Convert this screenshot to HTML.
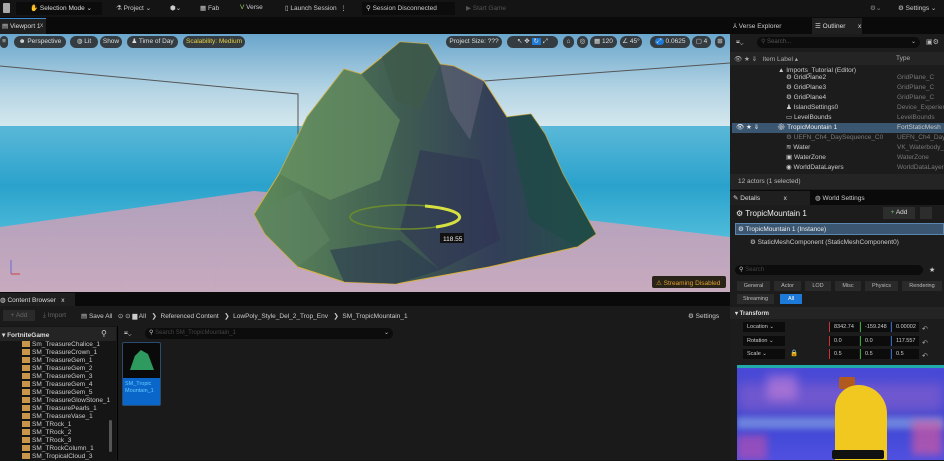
<!DOCTYPE html>
<html><head><meta charset="utf-8"><style>
*{margin:0;padding:0;box-sizing:border-box}
body{width:944px;height:460px;overflow:hidden;background:#151515;font-family:"Liberation Sans",sans-serif;color:#c8c8c8;font-size:7px;position:relative}
.a{position:absolute;white-space:nowrap}
.pill{position:absolute;top:36px;height:12px;border-radius:6px;background:rgba(40,40,40,.85);color:#ddd;font-size:6.5px;line-height:12px;text-align:center}
.row{position:absolute;left:732px;width:212px;height:10px;font-size:6.5px;line-height:10px;color:#ccc}
.tree{position:absolute;left:22px;font-size:6.5px;color:#ccc;line-height:8px}
.tree i{display:inline-block;width:8px;height:6px;background:#c8964a;margin-right:2px;vertical-align:-1px}
.btn{position:absolute;height:10px;background:#2a2a2a;color:#bbb;font-size:5.5px;line-height:10px;text-align:center}
.fld{position:absolute;height:10px;background:#0c0c0c;color:#ccc;font-size:5.5px;line-height:10px;padding-left:4px}
</style></head><body>
<div class="a" style="left:0;top:0;width:944px;height:17px;background:#141414"></div>
<div class="a" style="left:3px;top:3px;width:7px;height:10px;background:#aaa;border-radius:1px"></div>
<div class="a" style="left:16px;top:2px;width:86px;height:13px;background:#0c0c0c"></div>
<div class="a" style="left:30px;top:4px;font-size:6.5px;color:#ddd">✋ Selection Mode ⌄</div>
<div class="a" style="left:116px;top:4px;font-size:6.5px;color:#ccc">⚗ Project ⌄</div>
<div class="a" style="left:170px;top:4px;font-size:6.5px;color:#ccc">⬢⌄</div>
<div class="a" style="left:200px;top:4px;font-size:6.5px;color:#ccc">▦ Fab</div>
<div class="a" style="left:240px;top:4px;font-size:6.5px;color:#ccc"><span style="color:#9c6">V</span> Verse</div>
<div class="a" style="left:285px;top:4px;font-size:6.5px;color:#ccc">▯ Launch Session &nbsp;⋮</div>
<div class="a" style="left:362px;top:2px;width:93px;height:13px;background:#0c0c0c"></div>
<div class="a" style="left:366px;top:4px;font-size:6.5px;color:#ccc">⚲ Session Disconnected</div>
<div class="a" style="left:466px;top:4px;font-size:6.5px;color:#555">▶ Start Game</div>
<div class="a" style="left:870px;top:4px;font-size:6.5px;color:#888">⚙⌄</div>
<div class="a" style="left:898px;top:4px;font-size:6.5px;color:#ccc">⚙ Settings ⌄</div>
<div class="a" style="left:0;top:17px;width:944px;height:17px;background:#0a0a0a"></div>
<div class="a" style="left:0;top:18px;width:46px;height:16px;background:#1f1f1f;border-top:1px solid #3a8ad0"></div>
<div class="a" style="left:2px;top:22px;font-size:6.5px;color:#ddd">▤ Viewport 1</div>
<div class="a" style="left:40px;top:22px;font-size:6.5px;color:#aaa">x</div>
<svg class="a" style="left:0;top:34px" width="730" height="258" viewBox="0 34 730 258">
<defs>
<linearGradient id="sky" x1="0" y1="0" x2="0" y2="1"><stop offset="0" stop-color="#6aa6cc"/><stop offset=".6" stop-color="#b4d4e4"/><stop offset="1" stop-color="#d6e8ee"/></linearGradient>
<linearGradient id="sea" x1="0" y1="0" x2="0" y2="1"><stop offset="0" stop-color="#5ab8d8"/><stop offset=".5" stop-color="#2aa2cc"/><stop offset="1" stop-color="#55c0dc"/></linearGradient>
<linearGradient id="fl" x1="0" y1="0" x2="0" y2="1"><stop offset="0" stop-color="#b0a0bc"/><stop offset="1" stop-color="#c8aabe"/></linearGradient>
<linearGradient id="mt" x1="0" y1="0" x2="1" y2="0"><stop offset="0" stop-color="#5e8a5a"/><stop offset=".45" stop-color="#3e5a52"/><stop offset=".7" stop-color="#333e58"/><stop offset="1" stop-color="#24524a"/></linearGradient>
</defs>
<rect x="0" y="34" width="730" height="93" fill="url(#sky)"/>
<rect x="0" y="126" width="730" height="120" fill="url(#sea)"/>
<polygon points="0,227 254,191 596,221 730,237 730,292 0,292" fill="url(#fl)"/>
<g stroke="#b8a6c8" stroke-width=".5" opacity=".6">
<line x1="0" y1="250" x2="730" y2="250"/><line x1="0" y1="265" x2="730" y2="265"/><line x1="0" y1="280" x2="730" y2="280"/>
<line x1="60" y1="220" x2="20" y2="292"/><line x1="140" y1="208" x2="120" y2="292"/><line x1="220" y1="196" x2="215" y2="292"/><line x1="640" y1="228" x2="660" y2="292"/><line x1="700" y1="234" x2="725" y2="292"/>
</g>
<g stroke="#555" stroke-width="1" fill="none"><polyline points="0,66 298,94 298,144"/><line x1="484" y1="81" x2="730" y2="63"/></g>
<polygon points="254,214 279,174 307,117 344,69 361,74 382,57 400,42 428,44 440,64 454,66 484,81 507,117 531,114 545,134 563,174 596,234 577,247 489,267 396,284 344,282 298,267 265,234" fill="url(#mt)" stroke="#d8b040" stroke-width="1"/>
<polygon points="307,117 344,69 361,74 400,120 380,180 330,200 279,174" fill="#6a9464" opacity=".6"/>
<polygon points="382,57 400,42 428,44 440,64 420,110 395,100" fill="#3e5a4a" opacity=".8"/>
<polygon points="440,64 454,66 484,81 470,140 450,110" fill="#6a6a80" opacity=".5"/>
<polygon points="420,150 480,160 500,240 440,270 400,230" fill="#2e3454" opacity=".6"/>
<polygon points="507,117 531,114 545,134 563,174 596,234 577,247 530,220" fill="#1e4a46" opacity=".7"/>
<polygon points="254,214 300,190 330,240 298,267 265,234" fill="#5e8460" opacity=".6"/>
<polygon points="330,250 400,240 440,270 396,284 344,282" fill="#2a3850" opacity=".6"/>
<ellipse cx="405" cy="217" rx="55" ry="12" fill="none" stroke="#6a8a30" stroke-width="1.5"/>
<path d="M425,206 A55,12 0 0 1 436,227" fill="none" stroke="#d6e040" stroke-width="3"/>
<rect x="440" y="233" width="24" height="10" fill="#111"/>
<text x="443" y="241" font-size="6.5" fill="#eee" font-family="Liberation Sans">118.55</text>
<line x1="11" y1="260" x2="11" y2="274" stroke="#6a6ad0"/><line x1="11" y1="274" x2="20" y2="274" stroke="#d04040"/>
<rect x="652" y="276" width="74" height="12" rx="2" fill="#2a2418"/>
<text x="656" y="285" font-size="6.5" fill="#e0a030" font-family="Liberation Sans">⚠ Streaming Disabled</text>
</svg>
<div class="pill" style="left:0;width:8px">≡</div>
<div class="pill" style="left:14px;width:52px">☻ Perspective</div>
<div class="pill" style="left:70px;width:28px">◍ Lit</div>
<div class="pill" style="left:100px;width:22px">Show</div>
<div class="pill" style="left:127px;width:51px">♟ Time of Day</div>
<div class="pill" style="left:183px;width:62px;color:#e8d040">Scalability: Medium</div>
<div class="pill" style="left:446px;width:56px">Project Size: ???</div>
<div class="pill" style="left:507px;width:51px">↖ ✥ <span style="background:#1e7ad8;padding:0 2px">↻</span> ⤢</div>
<div class="pill" style="left:563px;width:11px">⌂</div>
<div class="pill" style="left:577px;width:11px">◎</div>
<div class="pill" style="left:590px;width:27px">▦ 120</div>
<div class="pill" style="left:620px;width:22px">∠ 45°</div>
<div class="pill" style="left:650px;width:40px"><span style="background:#1e7ad8;padding:0 2px;border-radius:4px">⤢</span> 0.0625</div>
<div class="pill" style="left:692px;width:19px">▢ 4</div>
<div class="pill" style="left:715px;width:10px">⊞</div>
<div class="a" style="left:730px;top:17px;width:214px;height:443px;background:#1c1c1c"></div>
<div class="a" style="left:730px;top:17px;width:214px;height:17px;background:#0a0a0a"></div>
<div class="a" style="left:733px;top:22px;font-size:6.5px;color:#ccc">⅄ Verse Explorer</div>
<div class="a" style="left:812px;top:18px;width:50px;height:16px;background:#1f1f1f"></div>
<div class="a" style="left:815px;top:22px;font-size:6.5px;color:#ddd">☰ Outliner &nbsp;&nbsp;&nbsp;&nbsp;&nbsp;&nbsp;x</div>
<div class="a" style="left:736px;top:39px;font-size:6.5px;color:#bbb">⩸⌄</div>
<div class="a" style="left:757px;top:37px;width:163px;height:11px;border-radius:6px;background:#0c0c0c;color:#555;font-size:6px;line-height:11px;padding-left:4px">⚲ Search... <span style="float:right;margin-right:4px;color:#bbb">⌄</span></div>
<div class="a" style="left:926px;top:38px;font-size:7px;color:#bbb">▣⚙</div>
<div class="a" style="left:730px;top:52px;width:214px;height:13px;background:#242424"></div>
<div class="a" style="left:734px;top:55px;font-size:6.5px;color:#aaa">👁 ★ ⇓ &nbsp;&nbsp;Item Label ▴</div>
<div class="a" style="left:896px;top:55px;font-size:6.5px;color:#aaa">Type</div>
<div class="row" style="top:66px;padding-left:46px">▲ Imports_Tutorial (Editor)</div>
<div class="row" style="top:73px;padding-left:54px">⚙ GridPlane2<span class="a" style="left:165px;color:#777">GridPlane_C</span></div>
<div class="row" style="top:83px;padding-left:54px">⚙ GridPlane3<span class="a" style="left:165px;color:#777">GridPlane_C</span></div>
<div class="row" style="top:93px;padding-left:54px">⚙ GridPlane4<span class="a" style="left:165px;color:#777">GridPlane_C</span></div>
<div class="row" style="top:103px;padding-left:54px">♟ IslandSettings0<span class="a" style="left:165px;color:#777">Device_Experien</span></div>
<div class="row" style="top:113px;padding-left:54px">▭ LevelBounds<span class="a" style="left:165px;color:#777">LevelBounds</span></div>
<div class="row" style="top:123px;background:#3a5670;padding-left:4px;color:#eee">👁 ★ ⇓ &nbsp;&nbsp;&nbsp;&nbsp;&nbsp;&nbsp;&nbsp;&nbsp;&nbsp;⚙ TropicMountain 1<span class="a" style="left:165px;color:#ccc">FortStaticMesh</span></div>
<div class="row" style="top:133px;padding-left:54px;color:#777">⚙ UEFN_Ch4_DaySequence_C0<span class="a" style="left:165px;color:#777">UEFN_Ch4_DayS</span></div>
<div class="row" style="top:143px;padding-left:54px">≋ Water<span class="a" style="left:165px;color:#777">VK_Waterbody_</span></div>
<div class="row" style="top:153px;padding-left:54px">▣ WaterZone<span class="a" style="left:165px;color:#777">WaterZone</span></div>
<div class="row" style="top:163px;padding-left:54px">◉ WorldDataLayers<span class="a" style="left:165px;color:#777">WorldDataLayer</span></div>
<div class="a" style="left:730px;top:174px;width:214px;height:15px;background:#242424"></div>
<div class="a" style="left:738px;top:178px;font-size:6.5px;color:#bbb">12 actors (1 selected)</div>
<div class="a" style="left:730px;top:190px;width:214px;height:15px;background:#0a0a0a"></div>
<div class="a" style="left:730px;top:191px;width:80px;height:14px;background:#1f1f1f"></div>
<div class="a" style="left:733px;top:194px;font-size:6.5px;color:#ddd">✎ Details &nbsp;&nbsp;&nbsp;&nbsp;&nbsp;&nbsp;&nbsp;&nbsp;&nbsp;&nbsp;&nbsp;&nbsp;x</div>
<div class="a" style="left:815px;top:194px;font-size:6.5px;color:#ccc">◍ World Settings</div>
<div class="a" style="left:736px;top:209px;font-size:8px;color:#eee">⚙ TropicMountain 1</div>
<div class="a" style="left:883px;top:207px;width:32px;height:12px;background:#2d2d2d;font-size:6.5px;line-height:12px;text-align:center;color:#ddd"><span style="color:#6c6">+</span> Add</div>
<div class="a" style="left:920px;top:207px;width:12px;height:12px;background:#2d2d2d"></div>
<div class="a" style="left:735px;top:223px;width:209px;height:12px;background:#3a5670;border:1px solid #5a86b0"></div>
<div class="a" style="left:738px;top:225px;font-size:6.5px;color:#eee">⚙ TropicMountain 1 (Instance)</div>
<div class="a" style="left:750px;top:238px;font-size:6.5px;color:#ccc">⚙ StaticMeshComponent (StaticMeshComponent0)</div>
<div class="a" style="left:735px;top:265px;width:188px;height:10px;border-radius:5px;background:#0c0c0c;color:#444;font-size:6px;line-height:10px;padding-left:4px"><span style="color:#ccc">⚲</span> Search</div>
<div class="a" style="left:929px;top:266px;font-size:7px;color:#ccc">★</div>
<div class="btn" style="left:737px;top:281px;width:33px">General</div>
<div class="btn" style="left:774px;top:281px;width:27px">Actor</div>
<div class="btn" style="left:805px;top:281px;width:26px">LOD</div>
<div class="btn" style="left:835px;top:281px;width:26px">Misc</div>
<div class="btn" style="left:865px;top:281px;width:33px">Physics</div>
<div class="btn" style="left:902px;top:281px;width:40px">Rendering</div>
<div class="btn" style="left:737px;top:294px;width:37px">Streaming</div>
<div class="btn" style="left:780px;top:294px;width:22px;background:#1e7ad8;color:#fff">All</div>
<div class="a" style="left:730px;top:307px;width:214px;height:12px;background:#242424"></div>
<div class="a" style="left:735px;top:310px;font-size:6px;color:#ddd;font-weight:bold">▾ Transform</div>
<div class="fld" style="left:743px;top:322px;width:42px">Location ⌄</div>
<div class="fld" style="left:829px;top:322px;width:30px;border-left:1px solid #c33">8342.74</div>
<div class="fld" style="left:860px;top:322px;width:30px;border-left:1px solid #3a3">-159.248</div>
<div class="fld" style="left:891px;top:322px;width:28px;border-left:1px solid #36c">0.00002</div>
<div class="fld" style="left:743px;top:336px;width:42px">Rotation ⌄</div>
<div class="fld" style="left:829px;top:336px;width:30px;border-left:1px solid #c33">0.0</div>
<div class="fld" style="left:860px;top:336px;width:30px;border-left:1px solid #3a3">0.0</div>
<div class="fld" style="left:891px;top:336px;width:28px;border-left:1px solid #36c">117.557</div>
<div class="fld" style="left:743px;top:349px;width:42px">Scale ⌄</div>
<div class="a" style="left:790px;top:349px;font-size:6.5px;color:#ccc">🔒</div>
<div class="fld" style="left:829px;top:349px;width:30px;border-left:1px solid #c33">0.5</div>
<div class="fld" style="left:860px;top:349px;width:30px;border-left:1px solid #3a3">0.5</div>
<div class="fld" style="left:891px;top:349px;width:28px;border-left:1px solid #36c">0.5</div>
<div class="a" style="left:922px;top:323px;font-size:7px;color:#aaa;line-height:13.5px">↶<br>↶<br>↶</div>
<div class="a" style="left:737px;top:365px;width:207px;height:95px;background:linear-gradient(180deg,#4a4ad8,#3a44d0 50%,#5050e0);overflow:hidden">
<div class="a" style="left:0;top:18px;width:207px;height:30px;background:rgba(200,120,200,.35);filter:blur(6px)"></div>
<div class="a" style="left:0;top:52px;width:207px;height:12px;background:rgba(140,170,230,.6);filter:blur(3px)"></div>
<div class="a" style="left:30px;top:10px;width:30px;height:25px;background:rgba(220,140,220,.5);filter:blur(5px)"></div>
<div class="a" style="left:175px;top:55px;width:30px;height:35px;background:rgba(230,90,150,.6);filter:blur(4px)"></div>
<div class="a" style="left:0;top:70px;width:30px;height:25px;background:rgba(220,80,160,.5);filter:blur(4px)"></div>
<div class="a" style="left:102px;top:12px;width:16px;height:12px;background:#b05a20;border-radius:2px"></div>
<div class="a" style="left:98px;top:20px;width:52px;height:90px;background:#f0c820;border-radius:28px 34px 10px 10px"></div>
<div class="a" style="left:95px;top:85px;width:52px;height:9px;background:#111;border-radius:2px"></div>
<div class="a" style="left:0;top:0;width:207px;height:3px;background:#2aa"></div>
</div>
<div class="a" style="left:0;top:292px;width:730px;height:168px;background:#1a1a1a"></div>
<div class="a" style="left:0;top:292px;width:730px;height:14px;background:#0a0a0a"></div>
<div class="a" style="left:0;top:293px;width:75px;height:13px;background:#1f1f1f"></div>
<div class="a" style="left:0;top:296px;font-size:6.5px;color:#ddd">◍ Content Browser &nbsp;&nbsp;x</div>
<div class="a" style="left:3px;top:310px;width:32px;height:11px;background:#2a2a2a;font-size:6.5px;line-height:11px;color:#666;text-align:center">+ Add</div>
<div class="a" style="left:43px;top:312px;font-size:6.5px;color:#666">⤓ Import</div>
<div class="a" style="left:81px;top:312px;font-size:6.5px;color:#ccc">▤ Save All &nbsp;&nbsp;⊙ ⊙ ▆ All &nbsp;&nbsp;❯ &nbsp;Referenced Content &nbsp;&nbsp;❯ &nbsp;LowPoly_Style_Del_2_Trop_Env &nbsp;&nbsp;❯ &nbsp;SM_TropicMountain_1</div>
<div class="a" style="left:688px;top:312px;font-size:6.5px;color:#ccc">⚙ Settings</div>
<div class="a" style="left:0;top:326px;width:116px;height:134px;background:#151515"></div>
<div class="a" style="left:0;top:327px;width:116px;height:14px;background:#242424"></div>
<div class="a" style="left:2px;top:331px;font-size:6.5px;color:#ddd;font-weight:bold">▾ FortniteGame</div>
<div class="a" style="left:101px;top:329px;font-size:8px;color:#ccc">⚲</div>
<div class="tree" style="top:341px"><i></i>Sm_TreasureChalice_1<br><i></i>SM_TreasureCrown_1<br><i></i>SM_TreasureGem_1<br><i></i>SM_TreasureGem_2<br><i></i>SM_TreasureGem_3<br><i></i>SM_TreasureGem_4<br><i></i>SM_TreasureGem_5<br><i></i>SM_TreasureGlowStone_1<br><i></i>SM_TreasurePearls_1<br><i></i>SM_TreasureVase_1<br><i></i>SM_TRock_1<br><i></i>SM_TRock_2<br><i></i>SM_TRock_3<br><i></i>SM_TRockColumn_1<br><i></i>SM_TropicalCloud_3</div>
<div class="a" style="left:109px;top:420px;width:3px;height:32px;background:#555;border-radius:2px"></div>
<div class="a" style="left:117px;top:326px;width:1px;height:134px;background:#000"></div>
<div class="a" style="left:124px;top:330px;font-size:6.5px;color:#bbb">⩸⌄</div>
<div class="a" style="left:145px;top:328px;width:248px;height:11px;border-radius:6px;background:#0c0c0c;font-size:6px;line-height:11px;color:#444;padding-left:4px"><span style="color:#ccc">⚲</span> Search SM_TropicMountain_1<span style="float:right;margin-right:4px;color:#ccc">⌄</span></div>
<div class="a" style="left:122px;top:342px;width:39px;height:64px;background:#0a0a0a;border:1px solid #2a4a70;border-radius:2px"></div>
<div class="a" style="left:130px;top:350px;width:24px;height:20px;background:#2e9a5e;clip-path:polygon(0 100%,20% 30%,45% 0,75% 20%,100% 100%)"></div>
<div class="a" style="left:123px;top:378px;width:37px;height:27px;background:#0a66c8;font-size:5.5px;color:#6cf;padding:3px 2px;white-space:normal;line-height:7px">SM_Tropic<br>Mountain_1</div>
</body></html>
